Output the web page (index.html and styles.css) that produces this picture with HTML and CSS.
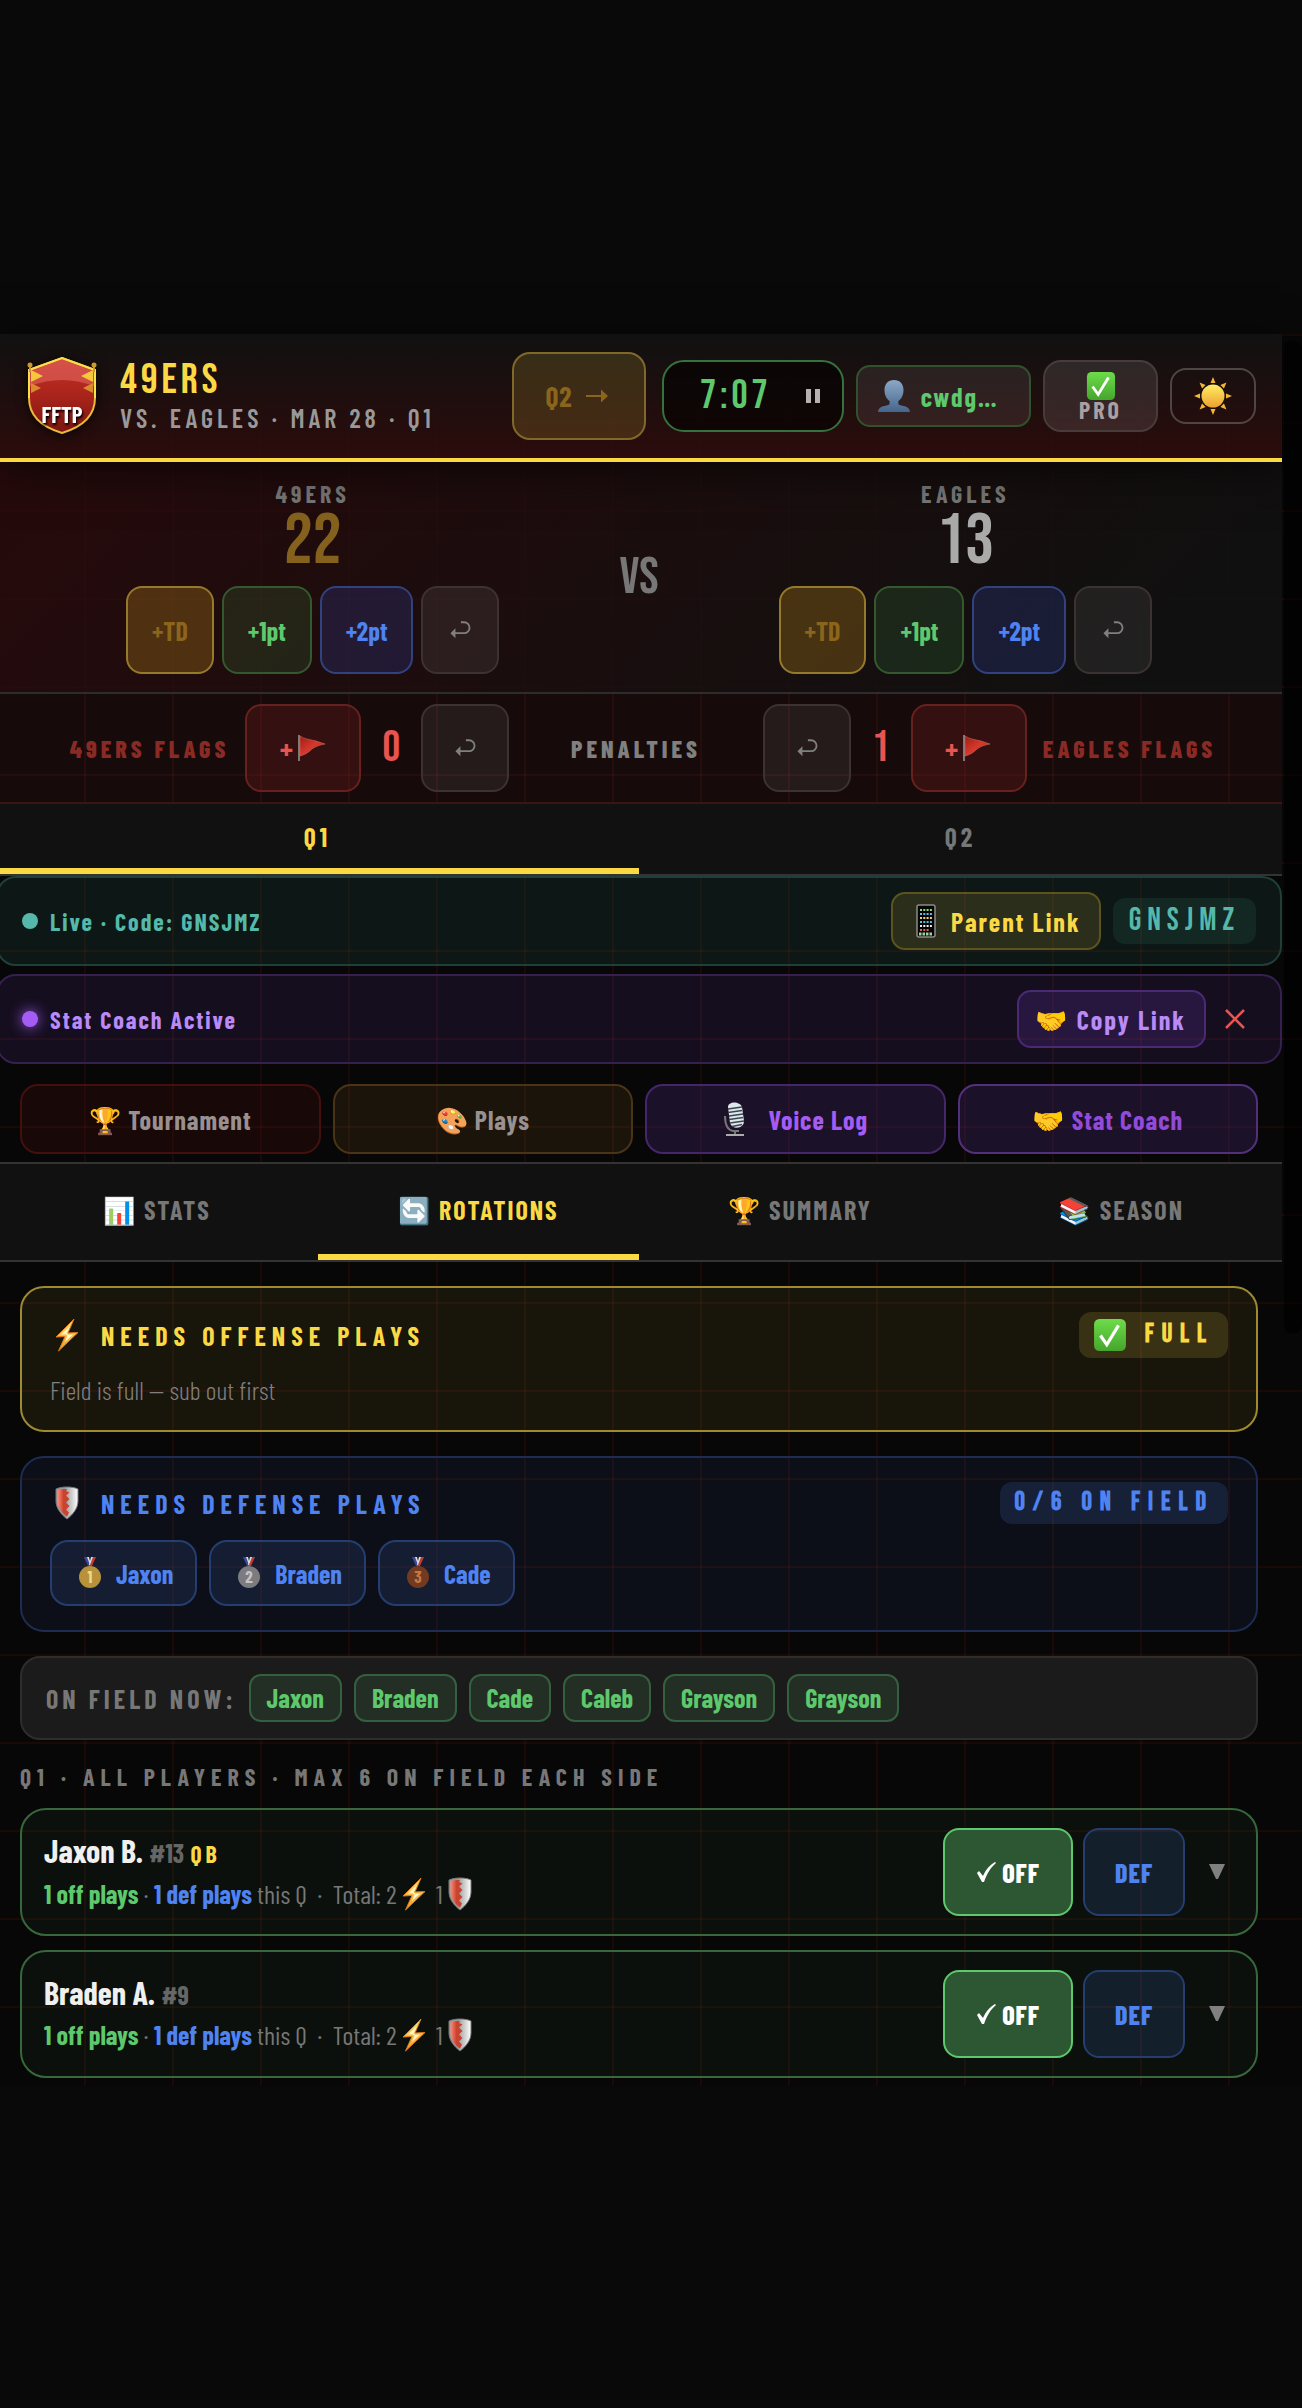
FILE: index.html
```html
<!DOCTYPE html>
<html lang="en">
  <head>
    <meta charset="utf-8">
    <title>49ers vs. Eagles</title>
    <link rel="stylesheet" href="styles.css">
  </head>
  <body>
    <!-- shared icons -->
    <svg width="0" height="0" class="defs">
      <defs>
        <linearGradient id="gShield" x1="0" x2="1" y1="0" y2="0">
          <stop offset="0" stop-color="#ff8a78" />
          <stop offset="0.5" stop-color="#c8442f" />
        </linearGradient>
        <linearGradient id="gSilver" x1="0" x2="1" y1="0" y2="0">
          <stop offset="0.4" stop-color="#9a9a9c" />
          <stop offset="1" stop-color="#ffffff" />
        </linearGradient>
        <linearGradient id="gBolt" x1="0" x2="0" y1="0" y2="1">
          <stop offset="0" stop-color="#ffe27a" />
          <stop offset="1" stop-color="#f59a23" />
        </linearGradient>
        <linearGradient id="gUser" x1="0" x2="0" y1="0" y2="1">
          <stop offset="0" stop-color="#8aa9c8" />
          <stop offset="1" stop-color="#46658c" />
        </linearGradient>
        <linearGradient id="gSun" x1="0" x2="0" y1="0" y2="1">
          <stop offset="0" stop-color="#ffee63" />
          <stop offset="1" stop-color="#eda030" />
        </linearGradient>
        <linearGradient id="gFlag" x1="0" x2="1" y1="0" y2="1">
          <stop offset="0" stop-color="#9c1d15" />
          <stop offset="0.5" stop-color="#d6382c" />
          <stop offset="1" stop-color="#a8231a" />
        </linearGradient>
        <linearGradient id="gCheck" x1="0" x2="0" y1="0" y2="1">
          <stop offset="0" stop-color="#6ddc4a" />
          <stop offset="1" stop-color="#46a52c" />
        </linearGradient>
        <linearGradient id="gCrest" x1="0" x2="0" y1="0" y2="1">
          <stop offset="0" stop-color="#c92f28" />
          <stop offset="0.5" stop-color="#a9241b" />
          <stop offset="1" stop-color="#7a1510" />
        </linearGradient>
      </defs>
      <symbol id="i-undo" viewBox="0 0 24 22">
        <path d="M13 2.500h3.500a5 5 0 0 1 0 12H6" fill="none" stroke="currentColor" stroke-width="2" />
        <path d="M1.500 14.500 7 9v11z" fill="currentColor" />
      </symbol>
      <symbol id="i-shield" viewBox="0 0 24 34">
        <path d="M12 1c4 0 8 .6 11 2v12c0 8-6 14-11 18C7 29 1 23 1 15V3c3-1.400 7-2 11-2z" fill="url(#gSilver)" stroke="#777" />
        <path d="M12 3C8 3 5 3.400 2.500 4.500V15c0 7 5 12.500 9.500 15.500l2-4-3-3 3.500-3.500-3.500-3.500 3.500-3.500-3.500-3.500 3.500-3L11 5z" fill="url(#gShield)" />
      </symbol>
      <symbol id="i-bolt" viewBox="0 0 24 34">
        <path d="M19 1 1 19l9-.5L3.500 33 23 14.500l-10 .5z" fill="url(#gBolt)" stroke="#d97a17" />
        <path d="M15 8 6 16.500l7-.5-3 8 8-7.500-7 .5z" fill="#fff6c9" />
      </symbol>
      <symbol id="i-check" viewBox="0 0 32 32">
        <rect x="1" y="1" width="30" height="30" rx="5" fill="url(#gCheck)" />
        <path d="M7 16.500 13 25 24 7" fill="none" stroke="#fff" stroke-width="3" />
      </symbol>
      <symbol id="i-flag" viewBox="0 0 30 28">
        <path d="M2 1v26" stroke="#999" stroke-width="1.500" />
        <path d="M3 2c4 3 12 4 16 5 3 1 6 2 9 3-5 1-9 2-13 5-4 4-8 6-12 7z" fill="url(#gFlag)" stroke="#d9726a" stroke-width=".5" />
      </symbol>
      <symbol id="i-ribbon" viewBox="0 0 24 32">
        <path d="M6 0h4l3 9h-3z" fill="#3b4b9c" />
        <path d="M9 0h2l2 8h-1z" fill="#ddd" />
        <path d="M18 0h-4l-3 9h3z" fill="#c23a35" />
        <path d="M15 0h-2l-2 8h1z" fill="#ddd" />
      </symbol>
      <symbol id="i-phone" viewBox="0 0 20 34">
        <rect x="1" y="1" width="18" height="32" rx="2" fill="#050505" stroke="#8a8a8a" stroke-width="1.500" />
        <path d="M4 6h12" stroke="#8fdc7a" stroke-width="2" stroke-dasharray="2 1.300" />
        <path d="M4 10h12" stroke="#6ab8ee" stroke-width="2" stroke-dasharray="2 1.300" />
        <path d="M4 14h12" stroke="#f0d870" stroke-width="2" stroke-dasharray="2 1.300" />
        <path d="M4 18h12" stroke="#4fc3d8" stroke-width="2" stroke-dasharray="2 1.300" />
        <path d="M4 22h12" stroke="#eee" stroke-width="2" stroke-dasharray="2 1.300" />
        <path d="M4 26h9" stroke="#e0605a" stroke-width="2" stroke-dasharray="2 1.300" />
        <path d="M3 30h14" stroke="#9ad5a0" stroke-width="3" stroke-dasharray="2.500 1" />
      </symbol>
      <symbol id="i-mic" viewBox="0 0 24 34">
        <path d="M5 5c0-6 12-6 14 0l2 14c0 8-12 9-14 2z" fill="#dfe6ec" />
        <path d="M5 7l14-2M5 10.500l14-2M6 14l14-2M6 17.500l14-2M7 21l14-2M9 24.500l10-2" stroke="#3c4650" stroke-width="1.500" />
        <path d="M2 14c0 10 3 14 8 15h6M12 28v4" fill="none" stroke="#777" stroke-width="2" />
        <path d="M3 33h18" stroke="#aaa" stroke-width="2" />
      </symbol>
    </svg>

    <div class="app">
      <header class="header">
        <svg class="crest" viewBox="0 0 72 80">
          <path d="M36 2 69 14v28c0 18-13 29-33 35C16 71 3 60 3 42V14z" fill="url(#gCrest)" stroke="#e8b93b" stroke-width="2" />
          <path d="M4 42V15L36 3l32 12v15Q36 18 4 30z" fill="#e0685f" opacity=".6" />
          <path d="M3 42V14L36 2l33 12v28" fill="none" stroke="#fbe04a" stroke-width="2" />
          <path d="M5 14l12 6-12 6zM67 14l-12 6 12 6z" fill="#f6c63d" />
          <path d="M5 27l10 5-10 5zM67 27l-10 5 10 5z" fill="#d98a2e" />
          <path d="M4 8v8M68 8v8" stroke="#c99a2c" stroke-width="2" />
          <circle cx="4" cy="9" r="2.500" fill="#c99a2c" />
          <circle cx="68" cy="9" r="2.500" fill="#c99a2c" />
          <text x="36" y="67" class="crest-text">FFTP</text>
        </svg>
        <div class="title">
          <h1>49ERS</h1>
          <div class="subtitle">VS. EAGLES · MAR 28 · Q1</div>
        </div>
        <div class="controls">
          <button class="next-q">Q2
            <svg width="24" height="18" viewBox="0 0 24 18"><path d="M1 9h18" stroke="currentColor" stroke-width="2" /><path d="M16 2.500 23 9l-7 6.500z" fill="currentColor" /></svg>
          </button>
          <div class="timer">
            <span class="clock">7:07</span>
            <button class="pause" aria-label="Pause">
              <svg width="14" height="14" viewBox="0 0 14 14"><path d="M0 0h5v14H0zM9 0h5v14H9z" fill="currentColor" /></svg>
            </button>
          </div>
          <button class="user">
            <svg width="34" height="34" viewBox="0 0 34 34"><path d="M17 1c6 0 9.500 4 9.500 10S24 20 21.500 22c-.5 3 0 4 3 4.500 5 1 8 2 8.500 6.500H1c.5-4.500 3.500-5.500 8.500-6.500 3-.5 3.500-1.500 3-4.500-2.500-2-5-5-5-11S11 1 17 1z" fill="url(#gUser)" /></svg>
            cwdg…
          </button>
          <button class="pro">
            <svg width="30" height="30"><use href="#i-check" /></svg>
            PRO
          </button>
          <button class="theme" aria-label="Theme">
            <svg width="38" height="38" viewBox="0 0 38 38">
              <path id="ray" d="M16.500 6 19 0l2.500 6zM16.500 32l2.500 6 2.500-6zM6 16.500 0 19l6 2.500zM32 16.500l6 2.500-6 2.500z" fill="#f3b838" />
              <use href="#ray" transform="rotate(45 19 19)" />
              <circle cx="19" cy="19" r="11.500" fill="url(#gSun)" />
            </svg>
          </button>
        </div>
      </header>

      <section class="score">
        <div class="team">
          <div class="team-name">49ERS</div>
          <div class="points home">22</div>
          <div class="score-btns">
            <button class="btn td">+TD</button>
            <button class="btn one">+1pt</button>
            <button class="btn two">+2pt</button>
            <button class="btn undo" aria-label="Undo"><svg width="22" height="20"><use href="#i-undo" /></svg></button>
          </div>
        </div>
        <div class="vs">VS</div>
        <div class="team">
          <div class="team-name">EAGLES</div>
          <div class="points">13</div>
          <div class="score-btns">
            <button class="btn td">+TD</button>
            <button class="btn one">+1pt</button>
            <button class="btn two">+2pt</button>
            <button class="btn undo" aria-label="Undo"><svg width="22" height="20"><use href="#i-undo" /></svg></button>
          </div>
        </div>
      </section>

      <section class="penalties">
        <div class="flags">
          <span class="flag-label">49ERS FLAGS</span>
          <button class="btn flag">+<svg width="30" height="28"><use href="#i-flag" /></svg></button>
          <span class="flag-count">0</span>
          <button class="btn undo wide" aria-label="Undo"><svg width="22" height="20"><use href="#i-undo" /></svg></button>
        </div>
        <span class="pen-label">PENALTIES</span>
        <div class="flags">
          <button class="btn undo wide" aria-label="Undo"><svg width="22" height="20"><use href="#i-undo" /></svg></button>
          <span class="flag-count">1</span>
          <button class="btn flag">+<svg width="30" height="28"><use href="#i-flag" /></svg></button>
          <span class="flag-label">EAGLES FLAGS</span>
        </div>
      </section>

      <nav class="quarters">
        <button class="active">Q1</button>
        <button>Q2</button>
      </nav>

      <div class="banner live">
        <span class="dot"></span>
        <span class="banner-text">Live · Code: GNSJMZ</span>
        <button class="link-btn"><svg width="34" height="34"><use href="#i-phone" /></svg>Parent Link</button>
        <span class="code">GNSJMZ</span>
      </div>
      <div class="banner coach">
        <span class="dot"></span>
        <span class="banner-text">Stat Coach Active</span>
        <button class="link-btn">🤝 <span>Copy Link</span></button>
        <button class="close" aria-label="Close">
          <svg width="20" height="20" viewBox="0 0 20 20"><path d="M1 1l18 18M19 1 1 19" stroke="currentColor" stroke-width="2.500" /></svg>
        </button>
      </div>

      <div class="tools">
        <button class="tournament">🏆 Tournament</button>
        <button class="plays">🎨 Plays</button>
        <button class="voice"><svg width="24" height="34"><use href="#i-mic" /></svg>Voice Log</button>
        <button class="stat">🤝 Stat Coach</button>
      </div>

      <nav class="tabs">
        <button>📊 STATS</button>
        <button class="active">🔄 ROTATIONS</button>
        <button>🏆 SUMMARY</button>
        <button>📚 SEASON</button>
      </nav>

      <main class="content">
        <section class="needs offense">
          <div class="needs-head">
            <svg width="24" height="34"><use href="#i-bolt" /></svg>
            <h2>NEEDS OFFENSE PLAYS</h2>
            <span class="count"><svg width="34" height="34"><use href="#i-check" /></svg>FULL</span>
          </div>
          <p>Field is full — sub out first</p>
        </section>

        <section class="needs defense">
          <div class="needs-head">
            <svg width="24" height="34"><use href="#i-shield" /></svg>
            <h2>NEEDS DEFENSE PLAYS</h2>
            <span class="count">0/6 ON FIELD</span>
          </div>
          <div class="picks">
            <button>
              <svg width="32" height="32" viewBox="0 0 24 32"><use href="#i-ribbon" /><circle cx="12" cy="20" r="11" fill="#b8923a" /><text x="12" y="26" fill="#ead98a">1</text></svg>
              Jaxon
            </button>
            <button>
              <svg width="32" height="32" viewBox="0 0 24 32"><use href="#i-ribbon" /><circle cx="12" cy="20" r="11" fill="#7c7c80" /><text x="12" y="26" fill="#c4c4c8">2</text></svg>
              Braden
            </button>
            <button>
              <svg width="32" height="32" viewBox="0 0 24 32"><use href="#i-ribbon" /><circle cx="12" cy="20" r="11" fill="#743a20" /><text x="12" y="26" fill="#c07a48">3</text></svg>
              Cade
            </button>
          </div>
        </section>

        <section class="on-field">
          <span class="on-label">ON FIELD NOW:</span>
          <span class="chip">Jaxon</span>
          <span class="chip">Braden</span>
          <span class="chip">Cade</span>
          <span class="chip">Caleb</span>
          <span class="chip">Grayson</span>
          <span class="chip">Grayson</span>
        </section>

        <h3>Q1 · ALL PLAYERS · MAX 6 ON FIELD EACH SIDE</h3>

        <div class="player">
          <div class="info">
            <div class="name">Jaxon B. <span class="num">#13</span> <span class="pos">QB</span></div>
            <div class="plays-line"><b class="off-n">1 off plays</b> · <b class="def-n">1 def plays</b> this Q &nbsp;·&nbsp; Total: 2<svg width="34" height="34"><use href="#i-bolt" /></svg> 1<svg width="34" height="34"><use href="#i-shield" /></svg></div>
          </div>
          <button class="btn off"><svg width="20" height="20" viewBox="0 0 20 20"><path d="M1 11l2-2 4 5C10 7 14 3 19 0l1 1C14 6 11 12 8 20H6z" fill="currentColor" /></svg>OFF</button>
          <button class="btn def">DEF</button>
          <button class="more" aria-label="More"><svg width="16" height="16" viewBox="0 0 16 16"><path d="M0 0h16L9 15H7z" fill="currentColor" /></svg></button>
        </div>

        <div class="player">
          <div class="info">
            <div class="name">Braden A. <span class="num">#9</span></div>
            <div class="plays-line"><b class="off-n">1 off plays</b> · <b class="def-n">1 def plays</b> this Q &nbsp;·&nbsp; Total: 2<svg width="34" height="34"><use href="#i-bolt" /></svg> 1<svg width="34" height="34"><use href="#i-shield" /></svg></div>
          </div>
          <button class="btn off"><svg width="20" height="20" viewBox="0 0 20 20"><path d="M1 11l2-2 4 5C10 7 14 3 19 0l1 1C14 6 11 12 8 20H6z" fill="currentColor" /></svg>OFF</button>
          <button class="btn def">DEF</button>
          <button class="more" aria-label="More"><svg width="16" height="16" viewBox="0 0 16 16"><path d="M0 0h16L9 15H7z" fill="currentColor" /></svg></button>
        </div>
      </main>
      <div class="scroll-thumb"></div>
    </div>
  </body>
</html>
```

FILE: styles.css
```css
* {
  box-sizing: border-box;
}

body {
  margin: 0;
  padding: 334px 0 300px;
  background: #090909;
  color: #f0f0f0;
  font: 26px/31px "Barlow Condensed", "Roboto Condensed", sans-serif;
  overflow-x: hidden;
}

h1, h2, h3, p {
  margin: 0;
}

button {
  font: inherit;
  color: inherit;
  background: none;
  border: 2px solid transparent;
  padding: 0;
  display: flex;
  align-items: center;
  justify-content: center;
  white-space: nowrap;
}

.defs {
  position: absolute;
}

/* app shell runs slightly past the left edge, with a gutter on the right */
.app {
  position: relative;
  margin-left: -4px;
  padding: 0 20px 8px 0;
  background-color: #070707;
  background-image:
    linear-gradient(rgba(150, 30, 10, 0.12) 2px, transparent 2px),
    linear-gradient(90deg, rgba(150, 30, 10, 0.12) 2px, transparent 2px);
  background-size: 88px 88px;
}

.scroll-thumb {
  position: absolute;
  top: 6px;
  right: 0;
  width: 18px;
  height: 994px;
  border-radius: 9px;
  background: rgba(0, 0, 0, 0.6);
}

/* header */
.header {
  position: relative;
  display: flex;
  align-items: center;
  height: 128px;
  padding: 0 26px;
  border-bottom: 4px solid #fbd945;
  background: linear-gradient(#111111, rgba(50, 12, 12, 0.85));
  box-shadow: 0 8px 40px rgba(0, 0, 0, 0.6);
}

.crest {
  width: 72px;
  height: 80px;
  margin-left: 4px;
  filter: drop-shadow(0 2px 6px rgba(0, 0, 0, 0.7));
}

.crest-text {
  font: 700 23px "Barlow Condensed", sans-serif;
  fill: #fff;
  text-anchor: middle;
  filter: drop-shadow(1px 2px 1px #000);
}

.title {
  margin-left: 22px;
}

.title h1 {
  font: 42px/42px "Bebas Neue", "Roboto Condensed", sans-serif;
  letter-spacing: 4px;
  color: #fbd945;
}

.subtitle {
  font-weight: 600;
  letter-spacing: 4px;
  color: #999;
}

.controls {
  display: flex;
  align-items: center;
  gap: 12px;
  margin-left: auto;
}

.next-q {
  gap: 12px;
  width: 134px;
  height: 88px;
  margin-right: 4px;
  padding-right: 4px;
  border-color: #80682a;
  border-radius: 18px;
  background: rgba(251, 217, 69, 0.15);
  color: #8b651b;
  font-size: 28px;
  font-weight: 700;
  letter-spacing: 1px;
}

.timer {
  display: flex;
  align-items: center;
  justify-content: space-between;
  width: 182px;
  height: 72px;
  padding: 0 22px 0 36px;
  border: 2px solid #34733e;
  border-radius: 22px;
  background: rgba(0, 0, 0, 0.55);
}

.clock {
  font: 40px/48px "Bebas Neue", "Roboto Condensed", sans-serif;
  letter-spacing: 4px;
  color: #5ec86c;
}

.pause {
  border: 0;
  color: #b8b0b0;
}

.user {
  gap: 10px;
  width: 175px;
  height: 62px;
  padding-right: 12px;
  border-color: #31522f;
  border-radius: 14px;
  background: rgba(255, 255, 255, 0.08);
  color: #5ec86c;
  font-weight: 700;
  letter-spacing: 2px;
}

.pro {
  flex-direction: column;
  width: 115px;
  height: 72px;
  padding-bottom: 2px;
  border-color: #473b3b;
  border-radius: 18px;
  background: rgba(255, 255, 255, 0.1);
  color: #aaa0a0;
  font-size: 24px;
  line-height: 18px;
  font-weight: 700;
  letter-spacing: 3px;
}

.theme {
  width: 86px;
  height: 56px;
  border-color: #4f4545;
  border-radius: 16px;
}

/* score */
.score {
  display: flex;
  align-items: center;
  padding: 20px 10px 18px;
  border-bottom: 2px solid #2d2d2d;
  background: linear-gradient(135deg, rgba(52, 11, 13, 0.7), rgba(17, 17, 17, 0.9) 90%);
}

.team {
  flex: 1;
  display: flex;
  flex-direction: column;
  align-items: center;
}

.team-name {
  font-size: 24px;
  line-height: 24px;
  font-weight: 700;
  letter-spacing: 4px;
  color: #777;
}

.points {
  font: 72px/72px "Bebas Neue", "Roboto Condensed", sans-serif;
  color: #aaa;
}

.points.home {
  color: #84611c;
}

.score-btns {
  display: flex;
  gap: 8px;
  margin-top: 8px;
}

.btn {
  height: 88px;
  padding: 0 24px;
  border-radius: 16px;
  font-weight: 700;
}

.td {
  border-color: #957a2c;
  background: rgba(245, 180, 30, 0.22);
  color: #8b651b;
}

.one {
  border-color: #34592f;
  background: rgba(70, 200, 90, 0.13);
  color: #5ec86c;
}

.two {
  border-color: #31427f;
  background: rgba(60, 90, 230, 0.18);
  color: #4f83f1;
}

.undo {
  width: 78px;
  border-color: #3c3232;
  background: rgba(255, 255, 255, 0.07);
  color: #808080;
}

.undo.wide {
  width: 88px;
}

.vs {
  font: 52px/60px "Bebas Neue", "Roboto Condensed", sans-serif;
  color: #777;
}

/* penalties */
.penalties {
  display: flex;
  align-items: center;
  justify-content: space-evenly;
  padding: 10px 4px 10px 12px;
  border-bottom: 2px solid #3b1414;
  background: rgba(220, 50, 50, 0.07);
}

.flags {
  display: flex;
  align-items: center;
  gap: 16px;
}

.flag-label, .pen-label {
  font-size: 24px;
  font-weight: 800;
  letter-spacing: 4px;
  color: #8a2a25;
}

.pen-label {
  color: #808080;
}

.flag {
  gap: 4px;
  width: 116px;
  border-color: #67211e;
  background: rgba(220, 50, 50, 0.16);
  color: #e8544f;
  font-size: 30px;
}

.flag-count {
  width: 28px;
  text-align: center;
  font: 44px/52px "Bebas Neue", "Roboto Condensed", sans-serif;
  color: #e8544f;
}

/* tab bars */
.quarters, .tabs {
  display: flex;
  border-bottom: 2px solid #333;
  background: #111;
}

.quarters button, .tabs button {
  flex: 1;
  height: 70px;
  border: 0;
  border-bottom: 6px solid transparent;
  color: #777;
  font-weight: 700;
  letter-spacing: 4px;
}

.tabs {
  border-top: 2px solid #333;
}

.tabs button {
  height: 96px;
  letter-spacing: 2px;
}

.quarters .active, .tabs .active {
  border-bottom-color: #fbd945;
  color: #fbd945;
}

/* status banners */
.banner {
  display: flex;
  align-items: center;
  height: 90px;
  padding: 0 24px;
  border: 2px solid #203f39;
  border-radius: 20px;
  background: rgba(80, 185, 170, 0.09);
  color: #55b8aa;
  font-weight: 700;
}

.coach {
  margin-top: 8px;
  border-color: #35204f;
  background: rgba(150, 80, 250, 0.1);
  color: #b98af8;
}

.dot {
  width: 16px;
  height: 16px;
  margin-right: 12px;
  border-radius: 50%;
  background: #55b8aa;
}

.coach .dot {
  background: #a45cf5;
  box-shadow: 0 0 14px #a45cf5;
}

.banner-text {
  margin-right: auto;
  font-size: 24px;
  letter-spacing: 2px;
}

.link-btn {
  gap: 8px;
  height: 58px;
  padding: 0 18px 0 16px;
  border-color: #5c531f;
  border-radius: 14px;
  background: rgba(251, 217, 69, 0.12);
  color: #fbd945;
  letter-spacing: 2px;
}

.coach .link-btn {
  border-color: #4a2a72;
  background: rgba(150, 80, 250, 0.15);
  color: #b98af8;
}

.code {
  margin-left: 12px;
  padding: 4px 16px;
  border-radius: 12px;
  background: rgba(80, 185, 170, 0.1);
  font: 32px/38px "Bebas Neue", "Roboto Condensed", sans-serif;
  letter-spacing: 6px;
}

.close {
  width: 42px;
  height: 44px;
  margin-left: 8px;
  color: #e8544f;
}

/* tool shortcuts */
.tools {
  display: flex;
  gap: 12px;
  padding: 20px 24px 8px;
}

.tools button {
  flex: 1;
  height: 70px;
  border-radius: 18px;
  font-weight: 700;
  letter-spacing: 1px;
  color: #999090;
}

.tools .tournament {
  border-color: #43100e;
  background: rgba(200, 20, 20, 0.09);
}

.tools .plays {
  border-color: #4a3415;
  background: rgba(230, 160, 40, 0.09);
}

.tools .voice {
  gap: 22px;
  border-color: #46266a;
  background: rgba(150, 80, 250, 0.14);
  color: #a45cf5;
}

.tools .stat {
  border-color: #53307c;
  background: rgba(150, 80, 250, 0.14);
  color: #924bd8;
}

/* rotations */
.content {
  display: flex;
  flex-direction: column;
  padding: 24px 24px 0;
}

.needs {
  margin-bottom: 24px;
  padding: 24px 28px;
  border: 2px solid #9e8a2f;
  border-radius: 24px;
  background: rgba(251, 217, 69, 0.07);
  color: #fbd945;
}

.defense {
  border-color: #1d2c50;
  background: rgba(79, 131, 241, 0.07);
  color: #4f83f1;
}

.needs-head {
  display: flex;
  align-items: center;
  padding-left: 5px;
}

.needs-head h2 {
  margin-left: 22px;
  font-size: 26px;
  font-weight: 700;
  letter-spacing: 6px;
}

.count {
  display: flex;
  align-items: center;
  gap: 18px;
  margin-left: auto;
  padding: 6px 14px;
  border-radius: 12px;
  background: rgba(251, 217, 69, 0.15);
  font: 700 26px/30px "Bebas Neue", "Roboto Condensed", sans-serif;
  letter-spacing: 8px;
}

.defense .count {
  background: rgba(79, 131, 241, 0.15);
}

.needs p {
  margin-top: 16px;
  line-height: 32px;
  font-weight: 300;
  color: #808080;
}

.picks {
  display: flex;
  gap: 12px;
  margin-top: 16px;
}

.picks button {
  gap: 10px;
  height: 66px;
  padding: 0 22px;
  border-color: #253d70;
  border-radius: 18px;
  background: rgba(79, 131, 241, 0.12);
  font-weight: 700;
}

.picks text {
  font-size: 17px;
  text-anchor: middle;
}

.on-field {
  display: flex;
  align-items: center;
  gap: 12px;
  height: 84px;
  padding: 0 24px;
  border: 2px solid #2d2d2d;
  border-radius: 20px;
  background: #1b1b1b;
}

.on-label {
  font-weight: 700;
  letter-spacing: 4px;
  color: #777;
}

.chip {
  height: 48px;
  padding: 0 16px;
  border: 2px solid #356040;
  border-radius: 12px;
  background: #232f24;
  color: #5ec86c;
  font-weight: 700;
  line-height: 44px;
}

h3 {
  margin: 22px 0 17px;
  font-size: 24px;
  line-height: 29px;
  font-weight: 700;
  letter-spacing: 6px;
  color: #777;
}

.player {
  display: flex;
  align-items: center;
  padding: 18px 20px 18px 22px;
  border: 2px solid #37673a;
  border-radius: 26px;
  background: rgba(94, 200, 108, 0.05);
}

.player + .player {
  margin-top: 14px;
}

.info {
  margin-right: auto;
  padding-bottom: 3px;
}

.name {
  font-size: 32px;
  line-height: 38px;
  font-weight: 700;
}

.num {
  font-size: 26px;
  color: #666;
}

.pos {
  font-size: 24px;
  letter-spacing: 4px;
  color: #fbd945;
}

.plays-line {
  margin-top: 4px;
  line-height: 34px;
  color: #777;
}

.plays-line svg {
  vertical-align: -7px;
}

.off-n {
  color: #5ec86c;
}

.def-n {
  color: #4f83f1;
}

.off {
  gap: 6px;
  width: 130px;
  margin-right: 10px;
  border-color: #5ec86c;
  background: #2d5732;
  color: #fff;
  font-weight: 800;
  letter-spacing: 1px;
}

.def {
  width: 102px;
  margin-right: 12px;
  border-color: #253d70;
  background: rgba(79, 131, 241, 0.14);
  color: #4f83f1;
  font-weight: 800;
  letter-spacing: 1px;
}

.more {
  width: 39px;
  height: 40px;
  color: #808080;
}
```
